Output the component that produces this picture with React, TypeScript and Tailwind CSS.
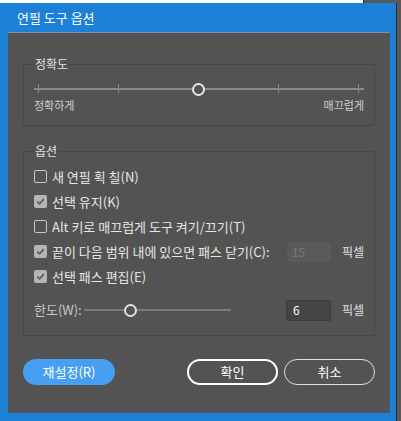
import type { ReactNode } from "react";

const FONT = { fontFamily: '"Noto Sans CJK KR", "Noto Sans", sans-serif' };

function CheckBox({ checked }: { checked: boolean }) {
  if (checked) {
    return (
      <span className="flex h-[13px] w-[13px] shrink-0 items-center justify-center rounded-[2px] bg-[#b4b4b4]">
        <svg width="9" height="9" viewBox="0 0 10 10">
          <path d="M1.5 5.2 L4 7.6 L8.6 2.4" fill="none" stroke="#5a5a5a" strokeWidth="1.8" />
        </svg>
      </span>
    );
  }
  return <span className="h-[13px] w-[13px] shrink-0 rounded-[2px] border border-[#c8c8c8]" />;
}

function Row({ checked, children }: { checked: boolean; children: ReactNode }) {
  return (
    <div className="flex h-[25px] items-center gap-[5px]">
      <CheckBox checked={checked} />
      <span className="text-[13px] text-[#e6e6e6]">{children}</span>
    </div>
  );
}

export default function App() {
  const ticks = [0, 80, 160, 240, 320];
  return (
    <div className="h-[421px] w-[401px] overflow-hidden bg-[#595959]" style={FONT}>
      <div className="flex h-[3px]">
        <div className="w-[363px] bg-white" />
        <div className="w-[1px] bg-[#2b2b2b]" />
      </div>
      <div className="flex h-[418px] w-[397px] flex-col border-r border-[#2b2b2b] bg-[#1b80d6]">
        <div className="flex h-[29px] items-center pl-[17px] text-[13px] text-white">연필 도구 옵션</div>
        <div className="ml-[8px] flex h-[381px] w-[382px] flex-col border-t border-[#7b93ad] bg-[#535353] px-[15px]">
          <fieldset className="mt-[23px] h-[70px] rounded-[2px] border border-[#474747] px-[10px]">
            <legend className="px-[1px] text-[12px] leading-[16px] text-[#e0e0e0]">정확도</legend>
            <div className="relative mt-[11px] h-[12px]">
              <div className="absolute left-0 right-0 top-[5px] h-[2px] bg-[#8a8a8a]" />
              {ticks.map((t) => (
                <div key={t} className="absolute top-[1px] h-[9px] w-[1px] bg-[#8a8a8a]" style={{ left: t + 4 }} />
              ))}
              <div className="absolute left-[158px] top-[0px] h-[13px] w-[13px] rounded-full border-[2px] border-[#e8e8e8] bg-[#535353]" />
            </div>
            <div className="mt-[2px] flex justify-between text-[11px] leading-[16px] text-[#d0d0d0]">
              <span>정확하게</span>
              <span>매끄럽게</span>
            </div>
          </fieldset>

          <fieldset className="mt-[17px] h-[193px] rounded-[2px] border border-[#474747] px-[10px]">
            <legend className="px-[1px] text-[12px] leading-[16px] text-[#e0e0e0]">옵션</legend>
            <div className="mt-[5px] flex flex-col">
              <Row checked={false}>새 연필 획 칠(N)</Row>
              <Row checked={true}>선택 유지(K)</Row>
              <Row checked={false}>Alt 키로 매끄럽게 도구 켜기/끄기(T)</Row>
              <div className="flex h-[25px] items-center">
                <div className="flex items-center gap-[5px]">
                  <CheckBox checked={true} />
                  <span className="text-[13px] text-[#e6e6e6]">끝이 다음 범위 내에 있으면 패스 닫기(C):</span>
                </div>
                <div className="ml-auto flex items-center">
                  <div className="flex h-[20px] w-[44px] items-center rounded-[2px] bg-[#5a5a5a] pl-[5px] text-[12px] text-[#7a7a7a]">15</div>
                  <span className="ml-[11px] text-[12px] text-[#e0e0e0]">픽셀</span>
                </div>
              </div>
              <Row checked={true}>선택 패스 편집(E)</Row>
              <div className="mt-[10px] flex h-[22px] items-center">
                <span className="text-[13px] text-[#c8c8c8]">한도(W):</span>
                <div className="relative ml-[2px] h-[13px] w-[147px]">
                  <div className="absolute left-0 right-0 top-[5px] h-[2px] bg-[#7a7a7a]" />
                  <div className="absolute left-[40px] top-0 h-[13px] w-[13px] rounded-full border-[2px] border-[#e0e0e0] bg-[#535353]" />
                </div>
                <div className="ml-auto flex items-center">
                  <div className="flex h-[21px] w-[45px] items-center rounded-[2px] border border-[#3c3c3c] bg-[#454545] pl-[6px] text-[12px] text-white">6</div>
                  <span className="ml-[11px] text-[12px] text-[#e0e0e0]">픽셀</span>
                </div>
              </div>
            </div>
          </fieldset>

          <div className="mt-[23px] flex items-center">
            <button type="button" className="h-[26px] w-[92px] rounded-full bg-[#469ff0] text-[13px] text-white">재설정(R)</button>
            <button type="button" className="ml-auto h-[26px] w-[91px] rounded-full border-[2px] border-white text-[13px] text-white">확인</button>
            <button type="button" className="ml-[6px] h-[26px] w-[91px] rounded-full border border-[#e0e0e0] text-[13px] text-white">취소</button>
          </div>
        </div>
      </div>
    </div>
  );
}
